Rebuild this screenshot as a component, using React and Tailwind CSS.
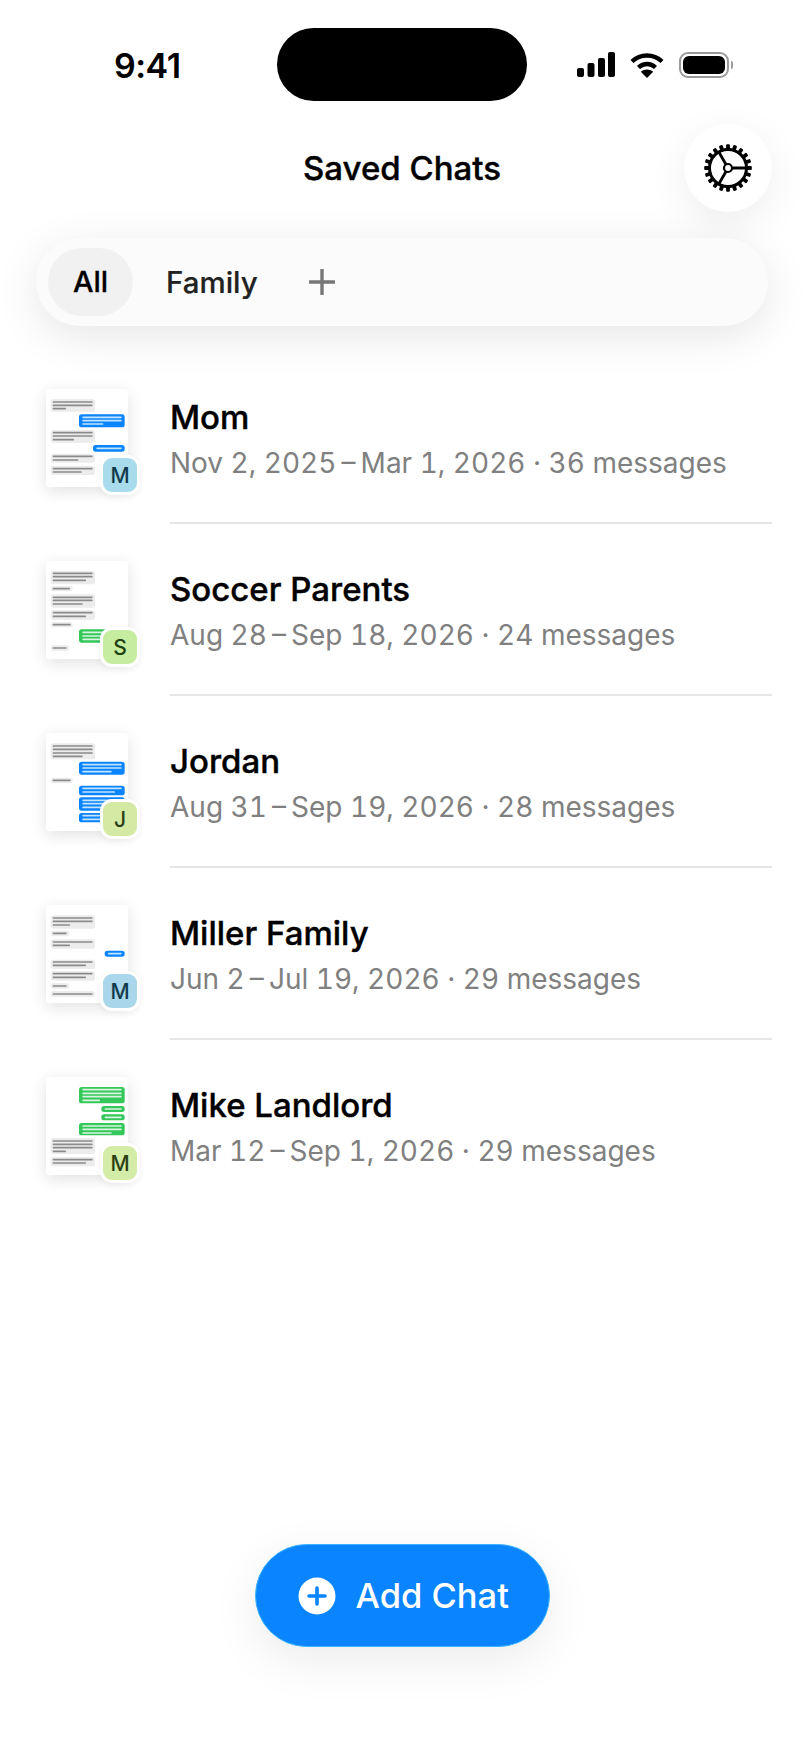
import React from "react";

const GREY = { bg: "#ececec", line: "#8a8a8a" };
const BLUE = { bg: "#0a84ff", line: "#c4e4ff" };
const GREEN = { bg: "#34c759", line: "#d9f5e0" };

// bubble: [kind, x0, x1, y0, y1, lines: [y, x0, x1]]
const L = (x1, y0, y1, lines) => [GREY, 62, x1, y0, y1, lines.map(([y, e]) => [y, 68, e])];
const R = (c, x0, y0, y1, lines) => [c, x0, 284, y0, y1, lines.map(([y, e]) => [y, x0 + 10, e])];

const rows = [
  {
    name: "Mom", sub: "Nov 2, 2025\u2009–\u2009Mar 1, 2026 · 36 messages", top: 42, letter: "M",
    badge: "#a8dcec", fg: "#103a4c",
    bubbles: [
      L(195, 72, 110, [[81, 188], [91, 188], [101, 108]]),
      R(BLUE, 147, 118, 157, [[127, 275], [137, 275], [147, 220]]),
      L(195, 165, 203, [[173, 188], [183, 188], [194, 132]]),
      R(BLUE, 189, 210, 230, [[220, 275]]),
      L(195, 236, 263, [[244, 188], [255, 145]]),
      L(195, 272, 300, [[281, 188], [291, 155]]),
    ],
  },
  {
    name: "Soccer Parents", sub: "Aug 28\u2009–\u2009Sep 18, 2026 · 24 messages", top: 35, letter: "S",
    badge: "#c6eca0", fg: "#1d3f14",
    bubbles: [
      L(195, 65, 105, [[72, 188], [82, 188], [93, 168]]),
      L(128, 110, 126, [[118, 120]]),
      L(195, 135, 175, [[144, 188], [153, 188], [164, 158]]),
      L(195, 183, 212, [[190, 188], [201, 168]]),
      L(128, 218, 234, [[226, 122]]),
      R(GREEN, 147, 240, 280, [[249, 275], [260, 275], [270, 275]]),
      L(118, 288, 304, [[296, 110]]),
    ],
  },
  {
    name: "Jordan", sub: "Aug 31\u2009–\u2009Sep 19, 2026 · 28 messages", top: 39, letter: "J",
    badge: "#d3e9a4", fg: "#2c3f14",
    bubbles: [
      L(195, 70, 118, [[78, 188], [88, 188], [99, 188], [109, 158]]),
      R(BLUE, 147, 125, 164, [[134, 275], [144, 275], [155, 245]]),
      L(128, 173, 190, [[181, 122]]),
      R(BLUE, 147, 197, 226, [[205, 275], [216, 255]]),
      R(BLUE, 147, 232, 272, [[241, 275], [251, 275], [262, 275]]),
      R(BLUE, 147, 279, 307, [[287, 275], [298, 275]]),
    ],
  },
  {
    name: "Miller Family", sub: "Jun 2\u2009–\u2009Jul 19, 2026 · 29 messages", top: 39, letter: "M",
    badge: "#a9d6ea", fg: "#103a4c",
    bubbles: [
      L(195, 70, 110, [[78, 188], [88, 188], [99, 120]]),
      L(118, 116, 133, [[124, 110]]),
      L(195, 142, 170, [[150, 188], [160, 120]]),
      R(BLUE, 224, 176, 194, [[185, 275]]),
      L(195, 203, 231, [[210, 188], [220, 168]]),
      L(195, 238, 266, [[245, 188], [256, 168]]),
      L(118, 273, 290, [[282, 110]]),
      L(195, 297, 315, [[306, 188]]),
    ],
  },
  {
    name: "Mike Landlord", sub: "Mar 12\u2009–\u2009Sep 1, 2026 · 29 messages", top: 39, letter: "M",
    badge: "#d3eca8", fg: "#2c3f14",
    bubbles: [
      R(GREEN, 147, 69, 118, [[77, 275], [88, 275], [98, 275], [109, 210]]),
      R(GREEN, 214, 126, 144, [[135, 275]]),
      R(GREEN, 214, 151, 169, [[160, 275]]),
      R(GREEN, 147, 177, 214, [[186, 275], [196, 275], [207, 245]]),
      L(195, 222, 270, [[231, 188], [241, 188], [251, 188], [262, 108]]),
      L(195, 279, 307, [[287, 188], [297, 168]]),
    ],
  },
];

function Doc({ top, bubbles }) {
  return (
    <svg width="82" height="98" viewBox={`48 ${top} 246 294`} className="block">
      {bubbles.map(([c, x0, x1, y0, y1, lines], i) => (
        <g key={i}>
          <rect x={x0} y={y0} width={x1 - x0} height={y1 - y0} rx="8" fill={c.bg} />
          {lines.map(([y, a, b], j) => (
            <rect key={j} x={a} y={y - 2.5} width={b - a} height="5" rx="2" fill={c.line} />
          ))}
        </g>
      ))}
    </svg>
  );
}

function Gear() {
  const c = 25;
  const teeth = [];
  for (let i = 0; i < 20; i++) {
    teeth.push(
      <rect key={i} x={c - 1.9} y={1.2} width="3.8" height="6" rx="1" fill="#000" transform={`rotate(${i * 18} ${c} ${c})`} />
    );
  }
  return (
    <svg width="50" height="50" viewBox="0 0 50 50">
      {teeth}
      <circle cx={c} cy={c} r="18.5" fill="none" stroke="#000" strokeWidth="3" />
      <circle cx={c} cy={c} r="4" fill="none" stroke="#000" strokeWidth="2.2" />
      <path d="M29 25H43M23 21.5L15.8 9M23 28.5L15.8 41" stroke="#000" strokeWidth="2.8" fill="none" />
    </svg>
  );
}

export default function App() {
  return (
    <div className="relative w-[804px] h-[1748px] bg-white flex flex-col overflow-hidden text-black font-['Inter','Liberation_Sans',sans-serif]">
      {/* status bar */}
      <div className="mt-[28px] flex items-center h-[73px]">
        <div className="w-[277px] pl-[114px] text-[34px] font-semibold tracking-[-0.5px] leading-none pt-[2px]">9:41</div>
        <div className="w-[250px] h-[73px] rounded-[37px] bg-black" />
        <div className="flex items-center pl-[50px] gap-[15px]">
          <svg width="38" height="25" viewBox="0 0 38 25">
            <rect x="0" y="16" width="7" height="9" rx="2" fill="#000" />
            <rect x="10.5" y="11" width="7" height="14" rx="2" fill="#000" />
            <rect x="21" y="6" width="7" height="19" rx="2" fill="#000" />
            <rect x="31" y="0" width="7" height="25" rx="2" fill="#000" />
          </svg>
          <svg width="34" height="26" viewBox="0 0 34 26">
            <path d="M2 9.5C10.5 1.5 23.5 1.5 32 9.5" fill="none" stroke="#000" strokeWidth="4.4" />
            <path d="M8.5 15.5C13.5 10.8 20.5 10.8 25.5 15.5" fill="none" stroke="#000" strokeWidth="4.4" />
            <path d="M17 26L10.8 19.8C14.4 16.8 19.6 16.8 23.2 19.8Z" fill="#000" />
          </svg>
          <div className="flex items-center gap-[2px]">
            <div className="w-[50px] h-[26px] rounded-[9px] border-2 border-[#9a9a9a] p-[2px]">
              <div className="w-full h-full rounded-[6px] bg-black" />
            </div>
            <div className="w-[2px] h-[8px] rounded-r-full bg-[#9a9a9a]" />
          </div>
        </div>
      </div>

      {/* header */}
      <div className="mt-[23px] mx-[32px] grid grid-cols-[88px_1fr_88px] items-center">
        <div />
        <div className="text-center text-[33px] font-medium pt-[2px] [-webkit-text-stroke:0.4px_#000]">Saved Chats</div>
        <div className="w-[88px] h-[88px] rounded-full bg-white shadow-[0_12px_40px_rgba(0,0,0,0.07)] flex items-center justify-center">
          <Gear />
        </div>
      </div>

      {/* tabs */}
      <div className="mt-[26px] mx-[36px] h-[88px] rounded-full bg-[#fbfbfb] shadow-[0_10px_44px_rgba(0,0,0,0.1)] flex items-center pl-[12px]">
        <div className="w-[85px] h-[68px] rounded-full bg-[#f1f1f1] flex items-center justify-center text-[29px] font-medium [-webkit-text-stroke:0.3px_#000]">All</div>
        <div className="ml-[33px] text-[29.5px] font-medium text-[#222222] [-webkit-text-stroke:0.2px_#222222]">Family</div>
        <svg className="ml-[51px]" width="26" height="26" viewBox="0 0 26 26">
          <path d="M13 1V25M1 13H25" stroke="#777" strokeWidth="3.4" strokeLinecap="round" />
        </svg>
      </div>

      {/* list */}
      <div className="mt-[26px] flex flex-col">
        {rows.map((r, i) => (
          <div key={i} className="flex items-stretch h-[172px] pl-[46px] pr-[32px]">
            <div className="self-center relative w-[82px] h-[98px] bg-white rounded-[3px] shadow-[0_4px_16px_rgba(0,0,0,0.12)] shrink-0">
              <Doc top={r.top} bubbles={r.bubbles} />
              <div
                className="absolute left-[54px] top-[66px] w-[40px] h-[40px] pt-[1px] rounded-[12px] border-[3px] border-white box-border flex items-center justify-center text-[21px] font-medium shadow-[0_2px_6px_rgba(0,0,0,0.06)]"
                style={{ backgroundColor: r.badge, color: r.fg }}
              >
                {r.letter}
              </div>
            </div>
            <div className={`ml-[42px] pt-[4px] flex-1 flex flex-col justify-center ${i < rows.length - 1 ? "border-b-2 border-[#e6e6e6]" : "border-b-2 border-transparent"}`}>
              <div className="text-[33px] font-medium leading-[40px] [-webkit-text-stroke:0.4px_#000]">{r.name}</div>
              <div className="mt-[8px] text-[28px] text-[#808080] leading-[36px] tabular-nums">{r.sub}</div>
            </div>
          </div>
        ))}
      </div>

      {/* add button */}
      <div className="mt-auto mb-[101px] self-center w-[295px] h-[103px] rounded-full bg-[#0a84ff] border border-[#3ab4ff] box-border shadow-[0_14px_48px_rgba(0,0,0,0.08)] flex items-center pl-[42px] gap-[20px]">
        <svg width="38" height="38" viewBox="0 0 38 38">
          <circle cx="19" cy="19" r="18.5" fill="#fff" />
          <path d="M19 11V27M11 19H27" stroke="#0a84ff" strokeWidth="3.6" strokeLinecap="round" />
        </svg>
        <span className="text-[34.5px] font-medium text-white">Add Chat</span>
      </div>
    </div>
  );
}
